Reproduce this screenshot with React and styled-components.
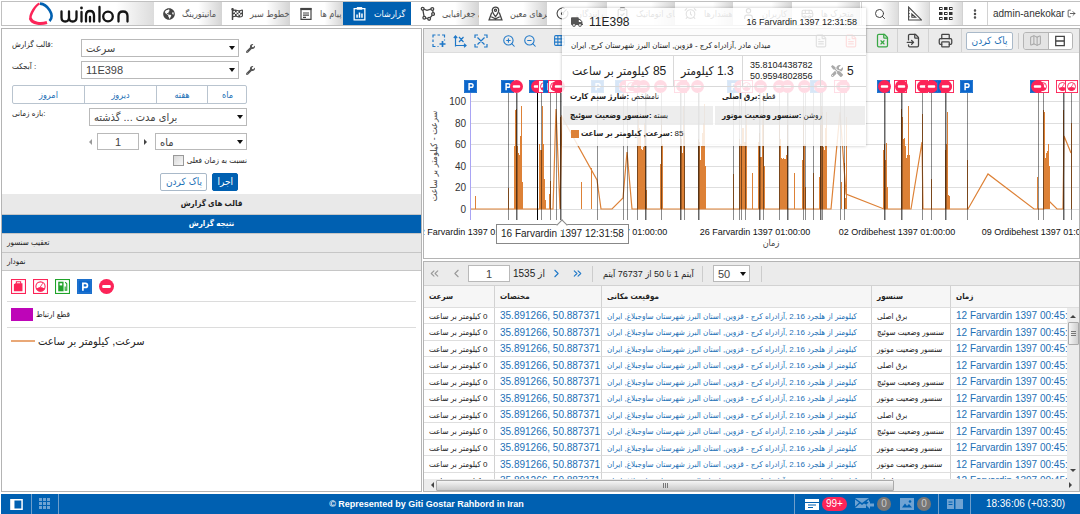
import React from 'react';
import styled, { createGlobalStyle, css } from 'styled-components';
import {
  FaGlobeAmericas, FaWrench, FaTools, FaFlagCheckered, FaTruck,
} from 'react-icons/fa';
import {
  Search, EllipsisVertical, LogOut, ZoomIn, ZoomOut, Printer, Map as MapIcon,
  ChevronLeft, ChevronRight, ChevronsLeft, ChevronsRight, AlarmClock, User,
  ClipboardCheck, FileText, FileX, FileInput, CircleGauge, Bus, Grid3x3, Image as Picture,
} from 'lucide-react';

const BLUE = '#0060b1';
const LINK = '#1c6fb5';
const LINE = '#d2d2d2';
const ORANGE = '#dd8136';
const RED = '#fc2458';

const GlobalStyle = createGlobalStyle`
  * { box-sizing: border-box; }
  html, body { margin: 0; padding: 0; }
  body {
    background: #fff;
    color: #222;
    font: 10px/14px "Liberation Sans", "DejaVu Sans Condensed", "DejaVu Sans", sans-serif;
  }
  button, input, select { font: inherit; margin: 0; padding: 0; color: inherit; }
  button { cursor: pointer; }
  a { text-decoration: none; color: inherit; }
  svg { display: block; flex: none; }
`;

const Page = styled.div`
  display: flex;
  flex-direction: column;
  gap: 2px;
  height: 100vh;
  padding: 1px 0 0 1px;
  overflow: hidden;
`;

/* ---------- top bar ---------- */

const TopBar = styled.header`
  display: flex;
  flex: none;
  height: 25px;
  border: 1px solid #c0c0c0;
  border-right: 0;
`;

const Brand = styled.div`
  display: flex;
  align-items: center;
  width: 152px;
  padding-left: 26px;
  background: linear-gradient(to right, #fff 75%, #dcdcdc);
`;

const Nav = styled.nav`
  display: flex;
  flex: 1;
  min-width: 0;
`;

const NavItem = styled.a`
  display: flex;
  align-items: center;
  gap: 7px;
  width: ${(p) => p.$w}px;
  padding-left: 9px;
  overflow: hidden;
  white-space: nowrap;
  font-size: 9px;
  color: ${(p) => (p.$active ? '#fff' : '#555')};
  background: ${(p) => (p.$active ? BLUE : 'linear-gradient(to right, #fff 65%, #d4d4d4)')};
  svg { color: ${(p) => (p.$active ? '#fff' : '#444')}; }
`;

const TopButton = styled.button`
  display: flex;
  align-items: center;
  justify-content: center;
  width: ${(p) => p.$w}px;
  border: 0;
  border-left: 1px solid ${LINE};
  background: ${(p) => (p.$shade ? 'linear-gradient(to right, #fff 50%, #dcdcdc)' : '#fff')};
  color: #444;
`;

const Account = styled.a`
  display: flex;
  align-items: center;
  gap: 2px;
  width: 93px;
  padding-left: 5px;
  border-left: 1px solid ${LINE};
  white-space: nowrap;
  color: #333;
`;

/* ---------- panels ---------- */

const Main = styled.main`
  display: grid;
  grid-template-columns: 421px minmax(0, 1fr);
  gap: 1px;
  flex: 1;
  min-height: 0;
`;

const Side = styled.section`
  border: 1px solid #b4b4b4;
  background: #fff;
`;

const Work = styled.div`
  display: grid;
  grid-template-rows: 231px minmax(0, 1fr);
  gap: 2px;
  min-height: 0;
`;

const Panel = styled.section`
  position: relative;
  display: flex;
  flex-direction: column;
  min-height: 0;
  border: 1px solid #b4b4b4;
  background: #fff;
`;

const Form = styled.form`
  display: flex;
  flex-direction: column;
  width: 246px;
  height: 165px;
  padding: 10px 0 0 10px;
`;

const Field = styled.div`
  display: flex;
  align-items: flex-start;
  justify-content: space-between;
  height: ${(p) => p.$h}px;
  width: ${(p) => p.$w || 235}px;
`;

const Label = styled.label`
  font-size: 8px;
  line-height: 11px;
  white-space: nowrap;
`;

const SelectBox = styled.span`
  position: relative;
  display: block;
  width: ${(p) => p.$w}px;
  height: ${(p) => p.$h || 18}px;
  select {
    appearance: none;
    width: 100%;
    height: 100%;
    padding: 0 4px;
    border: 1px solid #b9b9b9;
    border-radius: 0;
    background: #fff;
    color: #444;
    font-size: 11px;
  }
  &::after {
    content: '';
    position: absolute;
    right: 4px;
    top: 7px;
    border: 3px solid transparent;
    border-top: 4px solid #111;
    border-bottom: 0;
  }
`;

const FieldGroup = styled.div`
  display: flex;
  align-items: center;
  gap: ${(p) => p.$gap || 0}px;
`;

const ToolButton = styled.button`
  display: flex;
  align-items: center;
  justify-content: center;
  border: 0;
  background: none;
  color: ${(p) => p.$c || '#555'};
`;

const Segments = styled.div`
  display: grid;
  grid-template-columns: 71px 72px 51px 40px;
  height: 19px;
  margin-bottom: 4px;
  border: 1px solid #b9c4cf;
  border-radius: 2px;
  width: 235px;
  button {
    border: 0;
    background: none;
    color: ${LINK};
    font-size: 9px;
  }
  button + button { border-left: 1px solid #b9c4cf; }
`;

const NumberBox = styled.input`
  width: ${(p) => p.$w}px;
  height: 17px;
  border: 1px solid #b9b9b9;
  background: #fff;
  text-align: center;
  color: #444;
  font-size: 11px !important;
`;

const Check = styled.input`
  appearance: none;
  width: 11px;
  height: 11px;
  border: 1px solid #999;
  background: linear-gradient(135deg, #d8d8d8, #f8f8f8);
  &:checked { background: ${BLUE}; }
`;

const ActionButton = styled.button`
  height: 18px;
  padding: 0 4px;
  min-width: ${(p) => (p.$primary ? 25 : 47)}px;
  border: 1px solid ${(p) => (p.$primary ? BLUE : '#a9b9c9')};
  border-radius: 2px;
  background: ${(p) => (p.$primary ? BLUE : '#fff')};
  color: ${(p) => (p.$primary ? '#fff' : LINK)};
  white-space: nowrap;
  line-height: 14px;
`;

const Bar = styled.h2`
  margin: 0;
  height: ${(p) => p.$h}px;
  padding: 0 5px;
  border-bottom: 1px solid #c6c6c6;
  background: ${(p) => (p.$active ? BLUE : '#e9e9e9')};
  color: ${(p) => (p.$active ? '#fff' : '#222')};
  font-size: 8px;
  line-height: ${(p) => p.$h - 1}px;
  font-weight: ${(p) => (p.$left ? 400 : 700)};
  text-align: ${(p) => (p.$left ? 'left' : 'center')};
`;

const Legend = styled.div`
  padding: 0 5px;
`;

const LegendRow = styled.div`
  display: flex;
  align-items: center;
  gap: ${(p) => p.$gap || 3}px;
  height: ${(p) => p.$h}px;
  padding-left: 4px;
  & + & { border-top: 1px solid #dcdcdc; }
`;

const LegendText = styled.span`
  font-size: 11px;
`;

const Swatch = styled.i`
  width: ${(p) => p.$w}px;
  height: ${(p) => p.$h}px;
  background: ${(p) => p.$c};
`;

/* ---------- chart panel ---------- */

const ChartTools = styled.div`
  display: flex;
  align-items: center;
  flex: none;
  height: 24px;
  padding-left: 4px;
  background: #ebebeb;
  border-bottom: 1px solid #ddd;
`;

const Tool = styled(ToolButton)`
  width: ${(p) => p.$w || 21}px;
  height: 23px;
  color: ${(p) => p.$c || '#1f78c8'};
  border-right: ${(p) => (p.$sep ? `1px solid ${LINE}` : 0)};
`;

const Spacer = styled.div`
  flex: ${(p) => (p.$w ? `0 0 ${p.$w}px` : 1)};
`;

const Toggle = styled.div`
  display: flex;
  width: 50px;
  height: 18px;
  margin: 0 6px 0 4px;
  border: 1px solid #b5b5b5;
  border-radius: 3px;
  overflow: hidden;
`;

const ToggleSide = styled(ToolButton)`
  flex: 1;
  background: ${(p) => (p.$on ? '#fff' : '#e4e4e4')};
  color: ${(p) => (p.$on ? '#444' : '#aaa')};
  & + & { border-left: 1px solid #b5b5b5; }
`;

const ChartSvg = styled.svg`
  width: 100%;
  flex: 1;
  min-height: 0;
  overflow: hidden;
  .scale { font: 10px "Liberation Sans", sans-serif; fill: #333; }
  .tick { font: 9px "Liberation Sans", sans-serif; fill: #111; }
  .name { font: 9px "DejaVu Sans Condensed", "DejaVu Sans", sans-serif; fill: #444; }
`;

const Popup = styled.aside`
  position: absolute;
  left: 138px;
  top: -21px;
  z-index: 2;
  width: 304px;
  height: 138px;
  background: rgba(255, 255, 255, 0.84);
  box-shadow: 0 0 3px rgba(0, 0, 0, 0.25);
  color: #222;
`;

const PopupRow = styled.div`
  display: flex;
  align-items: center;
  height: ${(p) => p.$h}px;
  padding: 0 ${(p) => p.$pr || 9}px 0 9px;
  border-bottom: 1px solid #d9d9d9;
  white-space: nowrap;
  time { font-size: 9px; }
`;

const Title = styled.strong`
  flex: 1;
  margin-left: 6px;
  font-size: 12px;
  font-weight: 400;
`;

const Stat = styled.div`
  display: flex;
  align-items: center;
  gap: 4px;
  width: ${(p) => p.$w}px;
  height: 100%;
  padding-left: ${(p) => p.$p || 7}px;
  border-left: ${(p) => (p.$first ? 0 : '1px solid #d9d9d9')};
  font-size: ${(p) => p.$fs || 12}px;
  line-height: 11px;
`;

const Facts = styled.dl`
  display: grid;
  grid-template-columns: 150px 150px;
  grid-auto-rows: 19px;
  column-gap: 2px;
  margin: 0 1px;
  font-size: 8px;
`;

const Fact = styled.div`
  display: flex;
  align-items: center;
  gap: 2px;
  padding-left: 7px;
  white-space: nowrap;
  background: ${(p) => (p.$shade ? 'rgba(225,225,225,.6)' : 'none')};
  dt { font-weight: 700; }
  dd { margin: 0; }
`;

const SeriesNote = styled.div`
  display: flex;
  align-items: center;
  gap: 2px;
  height: 17px;
  padding-left: 9px;
  font-size: 8px;
  white-space: nowrap;
`;

const CursorLabel = styled.div`
  position: absolute;
  left: 72px;
  top: 195px;
  z-index: 3;
  height: 20px;
  padding: 0 4px;
  border: 1px solid #888;
  background: #fff;
  color: #222;
  line-height: 18px;
  white-space: nowrap;
  &::before {
    content: '';
    position: absolute;
    left: 61px;
    top: -4px;
    width: 7px;
    height: 7px;
    background: #fff;
    border: 1px solid #888;
    border-right: 0;
    border-bottom: 0;
    transform: rotate(45deg);
  }
`;

/* ---------- table panel ---------- */

const Pager = styled.div`
  display: flex;
  align-items: center;
  flex: none;
  height: 24px;
  background: #ebebeb;
  border-bottom: 1px solid ${LINE};
  white-space: nowrap;
`;

const PagerText = styled.span`
  width: ${(p) => p.$w}px;
  padding-left: ${(p) => p.$p || 0}px;
  font-size: ${(p) => p.$fs || 10}px;
`;

const Divider = styled.i`
  width: 1px;
  height: 16px;
  background: #ccc;
  margin: 0 ${(p) => p.$m || 0}px;
`;

const TableArea = styled.div`
  position: relative;
  flex: 1;
  min-height: 0;
  overflow: hidden;
`;

const Table = styled.table`
  width: 100%;
  min-width: 654px;
  table-layout: fixed;
  border-collapse: separate;
  border-spacing: 0;
  white-space: nowrap;
  th, td {
    padding: 0 4px 0 5px;
    border-right: 1px solid ${LINE};
    border-bottom: 1px solid #dedede;
    overflow: hidden;
    text-align: left;
    line-height: 13px;
  }
  th:last-child, td:last-child { border-right: 0; }
  th { height: 22px; background: #f6f6f6; font-size: 8px; }
  td { height: 16px; }
  tr:nth-child(even) td { height: 17px; }
`;

const Persian = styled.bdi`
  font-size: 8px;
`;

const LinkText = styled.a`
  color: ${LINK};
`;

const track = css`
  display: flex;
  align-items: center;
  justify-content: space-between;
  background: #ececec;
`;

const VScroll = styled.div`
  ${track}
  position: absolute;
  right: 0;
  top: 22px;
  bottom: 12px;
  width: 12px;
  flex-direction: column;
  padding: 4px 0;
`;

const HScroll = styled.div`
  ${track}
  position: absolute;
  left: 0;
  right: 0;
  bottom: 0;
  height: 12px;
  padding: 0 4px;
`;

const Arrow = styled.i`
  border: 3px solid transparent;
  border-${(p) => p.$side}: 3px solid ${(p) => p.$c || '#444'};
`;

const Thumb = styled.div`
  display: flex;
  align-items: center;
  justify-content: center;
  border: 1px solid #aaa;
  border-radius: 1px;
  background: ${(p) => (p.$v ? 'linear-gradient(to right, #f5f5f5, #cfcfcf)' : 'linear-gradient(#f5f5f5, #cacaca)')};
  ${(p) => (p.$v
    ? 'width: 11px; height: 23px; margin: 4px 0 auto;'
    : 'height: 11px; flex: 0 0 458px; margin: 0 auto 0 2px;')}
`;

const Grip = () => (
  <svg width="7" height="5" viewBox="0 0 7 5" stroke="#777"><path d="M1.500 0v5M3.500 0v5M5.500 0v5" /></svg>
);

const GripV = () => (
  <svg width="5" height="7" viewBox="0 0 5 7" stroke="#777"><path d="M0 1.500h5M0 3.500h5M0 5.500h5" /></svg>
);

/* ---------- status bar ---------- */

const StatusBar = styled.footer`
  display: flex;
  flex: none;
  height: 20px;
  background: ${BLUE};
  color: #fff;
`;

const StatusCell = styled.div`
  display: flex;
  align-items: center;
  justify-content: ${(p) => (p.$start ? 'flex-start' : 'center')};
  gap: 3px;
  width: ${(p) => p.$w}px;
  flex: ${(p) => (p.$grow ? 1 : 'none')};
  padding-left: ${(p) => (p.$start ? 10 : 0)}px;
  border-right: 1px solid #6f9ecb;
  color: ${(p) => (p.$dim ? '#6fa3d3' : '#fff')};
  font-weight: ${(p) => (p.$grow ? 700 : 400)};
  font-size: ${(p) => (p.$grow ? 9 : 10)}px;
  &:last-child { border-right: 0; }
`;

const Badge = styled.b`
  min-width: 14px;
  height: 14px;
  padding: 0 4px;
  margin-right: ${(p) => p.$m || 0}px;
  border-radius: 7px;
  background: ${(p) => p.$c};
  color: ${(p) => (p.$dim ? '#ccc' : '#fff')};
  font-weight: 400;
  text-align: center;
`;

/* ---------- drawings ---------- */

const Logo = () => (
  <svg width="106" height="23" viewBox="0 0 106 23" fill="none" aria-label="wialon" role="img">
    <path d="M11.500 1.500C8 3 1.500 12 2.500 17.500" stroke="#fc2458" strokeWidth="2.400" />
    <path d="M2.300 16C4 22.500 14 22 19 20.500" stroke="#fc2458" strokeWidth="3" />
    <path d="M12 1.600C19 2 27.500 13 21.500 19" stroke={BLUE} strokeWidth="2.600" />
    <g stroke="#151515" strokeWidth="2.300" strokeLinecap="round" strokeLinejoin="round">
      <path d="M33.500 9.500v6q0 4 3.700 4t3.800-4v-6M41 15.500q0 4 3.700 4t3.800-4v-6" />
      <path d="M53.500 10v9.500M58 19.500v-6q0-4.500 4-4.500t4 4.500v6M62 15v4.500" />
      <path d="M71.500 5v14.500" />
      <circle cx="80" cy="14.500" r="4.800" />
      <path d="M90.500 19.500v-5.500q0-4.500 4.500-4.500t4.500 4.500v5.500" />
    </g>
    <circle cx="53.500" cy="6" r="1.400" fill="#151515" />
  </svg>
);

const Glyph = ({ s = 14, children, w = 1.2 }) => (
  <svg width={s} height={s} viewBox="0 0 14 14" fill="none" stroke="currentColor" strokeWidth={w}>{children}</svg>
);

const MessagesIcon = () => <Glyph><path d="M2 1.600h10v10.800H2z" /><path d="M1.500 2h11" strokeWidth="2.200" /><path d="M4 6h6M4 8.200h6M4 10.400h3" /></Glyph>;
const ReportsIcon = () => <Glyph s={15}><path d="M2 2.500h10v10.500H2z" /><path d="M4.500 2.200h5" strokeWidth="2.400" /><path d="M4.700 11V8M7 11V6M9.300 11V7" strokeWidth="1.400" /></Glyph>;
const GeofenceIcon = () => <Glyph s={15}><path d="M2.500 2.500l4 1.500 5-1.500 1 5-4 4.500-4.500-1z" /><g fill="#fff"><circle cx="2.500" cy="2.500" r="1.300" /><circle cx="11.500" cy="2.800" r="1.300" /><circle cx="12.200" cy="7.500" r="1.300" /><circle cx="8.500" cy="12" r="1.300" /><circle cx="4" cy="11" r="1.300" /></g></Glyph>;
const RoutesIcon = () => <Glyph s={15}><path d="M3.500 6L1 13h12l-2.500-7M3 10l4 2 4-2" /><path d="M7 10C5 7.500 4 6 4 4a3 3 0 0 1 6 0c0 2-1 3.500-3 6z" fill="#fff" /><circle cx="7" cy="4" r="1" /></Glyph>;
const RulerIcon = () => <Glyph s={15} w={1}><path d="M1.500 1v12h12z" /><path d="M4.500 7.500v3h3.500z" /><path d="M1.500 4h1M1.500 7h1M1.500 10h1" /></Glyph>;
const AppsIcon = () => (
  <svg width="14" height="13" viewBox="0 0 14 13" fill="none" stroke="#333">
    {[0, 5, 10].map((y) => [0, 5, 10].map((x) => (
      <rect key={x + '-' + y} x={x + 0.5} y={y + 0.5} width="2.500" height="2" fill={(x + y) % 10 === 0 ? 'none' : '#333'} />
    )))}
  </svg>
);
const SelectAreaIcon = () => <Glyph><path d="M1 3.500V1h2.500M10 1h2.500v2.500M1 10v2.500h2.500M5.500 1h2.500M1 5.500v2.500M12.500 5.500v1M5.500 12.500h1" /><path d="M7.500 10h6M10.500 7v6" strokeWidth="1.700" /></Glyph>;
const AxisIcon = () => <Glyph><path d="M2.500 12.500V2M.8 4l1.700-2 1.700 2M2.500 11.500H13M11 9.800l2 1.700-2 1.700M6 3l4.500 5M10.500 3L6 8" /></Glyph>;
const ResetIcon = () => <Glyph><path d="M1 4V1h3M10 1h3v3M1 10v3h3M13 10v3h-3M3.500 3.500l7 7M10.500 3.500l-7 7" /></Glyph>;
const SplitIcon = () => <Glyph s={12} w={1.5}><path d="M2 1.500h10v11H2zM2 7h10" /></Glyph>;

const Square = ({ x = 0, y = 0, s = 13, c, children }) => (
  <g transform={`translate(${x} ${y}) scale(${s / 14})`}>
    <rect x=".5" y=".5" width="13" height="13" fill="#fff" stroke={c} />
    {children}
  </g>
);

const Marker = ({ type, x = 0, y = 0, s = 13 }) => {
  if (type === 'p') {
    return (
      <Square x={x} y={y} s={s} c="#1c70cc">
        <rect x="1" y="1" width="12" height="12" fill="#0b66cc" />
        <path d="M5.500 11V4h2.300a1.900 1.900 0 0 1 0 3.900H5.500" fill="none" stroke="#fff" strokeWidth="1.600" />
      </Square>
    );
  }
  if (type === 'stop') {
    return (
      <g transform={`translate(${x} ${y}) scale(${s / 14})`}>
        <circle cx="7" cy="7" r="7" fill={RED} />
        <rect x="3" y="5.600" width="8" height="2.800" rx="1" fill="#fff" />
      </g>
    );
  }
  if (type === 'gauge') {
    return (
      <Square x={x} y={y} s={s} c={RED}>
        <circle cx="7" cy="7" r="4.300" fill="#fff" stroke={RED} />
        <path d="M3.200 9.200Q7 6.500 10.800 9.200 7 13.500 3.200 9.200zM6.500 8l2.500-4" fill={RED} stroke={RED} strokeWidth=".8" />
      </Square>
    );
  }
  if (type === 'fuel') {
    return (
      <Square x={x} y={y} s={s} c="#20a32a">
        <path d="M3 2.500h5v9H3z" fill="#20a32a" />
        <path d="M4.300 4h2.400v2H4.300z" fill="#fff" />
        <path d="M9.500 3l1.500 1.500v6H9.500V7" fill="none" stroke="#20a32a" />
      </Square>
    );
  }
  return (
    <Square x={x} y={y} s={s} c={RED}>
      <path d="M2.700 5l1.500-1h6.500v7.500h-8z" fill={RED} />
      <path d="M5 4.500V2.500h4v2" fill="none" stroke={RED} />
    </Square>
  );
};

const MarkerIcon = ({ type }) => (
  <svg width="15" height="15" viewBox="0 0 15 15"><Marker type={type} s={15} /></svg>
);

/* ---------- chart ---------- */

const ZERO = 156;
const yOf = (v) => Math.round(ZERO - v * 1.08);

// [x, weight] for each event that draws a vertical line
const EVENTS = [
  [84, 0], [92, 1], [113, 2], [117, 0], [126, 0], [132, 0], [136, 1], [173, 0], [199, 0], [203, 0],
  [213, 0], [221, 1], [237, 0], [256, 1], [260, 0], [274, 1], [309, 0], [315, 0], [317, 0], [321, 0],
  [335, 1], [339, 0], [355, 0], [363, 1], [379, 0], [381, 0], [389, 0], [396, 1], [398, 0], [416, 0],
  [420, 0], [460, 1], [477, 1], [498, 0], [507, 0], [521, 1], [543, 0], [614, 0], [619, 0], [639, 1], [647, 0],
];

// runs of trips: start x and the speed at each following pixel
const TRIPS = [
  [51, [12]], [84, [19]],
  [90, [58, 92, 93, 58, 52, 50, 68, 95, 25]],
  [113, [22, 0, 60, 55, 55, 95, 60, 28, 8]],
  [125, [14, 26]], [136, [85]], [157, [25]], [167, [38]],
  [213, [60, 90, 75, 70, 56, 55, 57, 80, 70, 18]],
  [236, [42, 90, 60]],
  [256, [70, 65, 52, 95, 70]],
  [274, [65, 62, 45, 58, 70, 80, 97, 40]],
  [309, [32]], [315, [65, 60, 60, 75, 75, 62, 62, 85]],
  [328, [33]], [334, [62, 70, 48, 48, 85, 95, 40]],
  [355, [85, 65, 47, 46, 47, 46, 46, 50, 90]],
  [370, [33]], [378, [45, 95, 60, 20]], [389, [33]],
  [395, [30, 80, 95, 90, 57, 55, 75, 90]],
  [417, [25]], [420, [43, 10, 85]],
  [459, [55, 60, 45, 61, 20]],
  [477, [93, 85, 65, 66, 58, 47, 50, 95, 50]],
  [498, [88]], [507, [28]],
  [521, [55, 60, 90, 13, 12]], [543, [45]], [613, [30]],
  [619, [92, 90, 47, 52, 54, 60, 40]],
  [639, [92]], [647, [80]],
];

const TREND = [
  [47, 0], [129, 0], [132, 93], [136, 0], [138, 85], [173, 27], [177, 0], [188, 0], [199, 10], [203, 53], [208, 0],
  [407, 0], [416, 90], [422, 14], [460, 0], [487, 0], [498, 62], [499, 0], [544, 0], [564, 32], [610, 0],
  [620, 0], [625, 7], [633, 0], [639, 0], [640, 68], [647, 52],
];

const MARKERS = [
  ['p', 46], ['p', 83], ['stop', 92], ['p', 111], ['stop', 113], ['gauge', 120], ['p', 125], ['gauge', 130], ['stop', 134],
  ['p', 173], ['p', 197], ['stop', 201], ['gauge', 207], ['stop', 213], ['stop', 219], ['stop', 236], ['gauge', 256], ['stop', 259],
  ['stop', 273], ['p', 309], ['stop', 316], ['gauge', 322], ['stop', 336], ['stop', 355], ['stop', 363], ['stop', 380],
  ['p', 392], ['stop', 396], ['gauge', 416], ['stop', 419], ['p', 459], ['stop', 460], ['gauge', 476], ['stop', 477],
  ['gauge', 497], ['stop', 499], ['p', 511], ['stop', 507], ['p', 519], ['gauge', 523], ['stop', 521], ['p', 542],
  ['p', 612], ['gauge', 618], ['stop', 613], ['gauge', 638], ['gauge', 647],
];

const TICKS = [
  [46, '12 Farvardin 1397 01:00:00'], [188, '19 Farvardin 1397 01:00:00'], [331, '26 Farvardin 1397 01:00:00'],
  [473, '02 Ordibehest 1397 01:00:00'], [616, '09 Ordibehest 1397 01:00:00'],
];

const tripPath = ([x, speeds]) => `M${x} ${ZERO}${speeds.map((v, i) => `V${yOf(v)}H${x + i + 1}`).join('')}V${ZERO}z`;

const SpeedChart = () => (
  <ChartSvg role="img" aria-label="نمودار سرعت">
    {[0, 20, 40, 60, 80, 100].map((v) => (
      <g key={v}>
        <rect x="47" y={yOf(v)} width="100%" height="1" fill="#dedede" />
        <text className="scale" x="42" y={yOf(v) + 4} textAnchor="end">{v}</text>
      </g>
    ))}
    {TRIPS.map((t) => <path key={t[0]} d={tripPath(t)} fill={ORANGE} />)}
    <polyline points={TREND.map(([x, v]) => `${x},${yOf(v)}`).join(' ')} fill="none" stroke={ORANGE} strokeWidth="1.200" />
    <rect x="46" y="40" width="1" height="127" fill="#a9a4f4" />
    {EVENTS.map(([x, k]) => (
      <rect key={x} x={x} y="40" width={k === 1 ? 1.5 : 1} height="127" fill="#000" opacity={[0.45, 0.6, 1][k]} />
    ))}
    {MARKERS.map(([type, x], i) => <Marker key={i} type={type} x={x - 6} y={27} />)}
    {TICKS.map(([x, t]) => <text key={t} className="tick" x={x} y="182" textAnchor="middle">{t}</text>)}
    <text className="name" x="347" y="193" textAnchor="middle">زمان</text>
    <text className="name" transform="translate(13 103) rotate(-90)" textAnchor="middle">سرعت - کیلومتر بر ساعت</text>
  </ChartSvg>
);

/* ---------- sections ---------- */

const NAV = [
  ['مانیتورینگ', <FaGlobeAmericas size={12} />, 68],
  ['خطوط سیر', <FaFlagCheckered size={12} />, 68],
  ['پیام ها', <MessagesIcon />, 53],
  ['گزارشات', <ReportsIcon />, 68, true],
  ['محدوده های جغرافیایی', <GeofenceIcon />, 68],
  ['مسیرهای معین', <RoutesIcon />, 68],
  ['رانندگان', <CircleGauge size={13} />, 60],
  ['کارهای اتوماتیک', <ClipboardCheck size={13} />, 68],
  ['هشدارها', <AlarmClock size={13} />, 58],
  ['کاربران', <User size={13} />, 59],
  ['متحرک ها', <Bus size={13} />, 68],
];

const Header = () => (
  <TopBar>
    <Brand><Logo /></Brand>
    <Nav>
      {NAV.map(([text, icon, w, active]) => (
        <NavItem key={text} href="#" $w={w} $active={active}>{icon}<span>{text}</span></NavItem>
      ))}
    </Nav>
    <TopButton $w={37} $shade aria-label="جستجو"><Search size={12} /></TopButton>
    <TopButton $w={31} $shade aria-label="ابزار"><RulerIcon /></TopButton>
    <TopButton $w={33} $shade aria-label="برنامه ها"><AppsIcon /></TopButton>
    <TopButton $w={25} aria-label="بیشتر"><EllipsisVertical size={12} strokeWidth={3} /></TopButton>
    <Account href="#">admin-anekokar<LogOut size={9} /></Account>
  </TopBar>
);

const SelectField = ({ id, w, h, value }) => (
  <SelectBox $w={w} $h={h}>
    <select id={id} aria-label={value} defaultValue={value}><option>{value}</option></select>
  </SelectBox>
);

const ReportForm = () => (
  <Form onSubmit={(e) => e.preventDefault()}>
    <Field $h={22} $w={243}>
      <Label htmlFor="template">قالب گزارش:</Label>
      <FieldGroup $gap={7}>
        <SelectField id="template" w={158} value="سرعت" />
        <ToolButton type="button" aria-label="ویرایش قالب"><FaWrench size={9} /></ToolButton>
      </FieldGroup>
    </Field>
    <Field $h={24} $w={243}>
      <Label htmlFor="unit">آبجکت :</Label>
      <FieldGroup $gap={7}>
        <SelectField id="unit" w={158} value="11E398" />
        <ToolButton type="button" aria-label="ویرایش آبجکت"><FaWrench size={9} /></ToolButton>
      </FieldGroup>
    </Field>
    <Segments>
      {['امروز', 'دیروز', 'هفته', 'ماه'].map((t) => <button type="button" key={t}>{t}</button>)}
    </Segments>
    <Field $h={25}>
      <Label htmlFor="range">بازه زمانی:</Label>
      <SelectField id="range" w={158} value="برای مدت ... گذشته" />
    </Field>
    <Field $h={22}>
      <span />
      <FieldGroup $gap={5}>
        <ToolButton type="button" aria-label="کمتر"><Arrow $side="right" $c="#999" /></ToolButton>
        <NumberBox $w={42} defaultValue="1" aria-label="تعداد" />
        <ToolButton type="button" aria-label="بیشتر"><Arrow $side="left" /></ToolButton>
        <SelectField id="period" w={92} h={17} value="ماه" />
      </FieldGroup>
    </Field>
    <Field $h={18}>
      <span />
      <FieldGroup $gap={3}>
        <Check type="checkbox" id="relative" />
        <Label htmlFor="relative">نسبت به زمان فعلی</Label>
      </FieldGroup>
    </Field>
    <Field $h={19} $w={226}>
      <span />
      <FieldGroup $gap={5}>
        <ActionButton type="button">پاک کردن</ActionButton>
        <ActionButton type="submit" $primary>اجرا</ActionButton>
      </FieldGroup>
    </Field>
  </Form>
);

const Sidebar = () => (
  <Side>
    <ReportForm />
    <Bar $h={21}>قالب های گزارش</Bar>
    <Bar $h={19} $active>نتیجه گزارش</Bar>
    <Bar $h={19} $left>تعقیب سنسور</Bar>
    <Bar $h={18} $left>نمودار</Bar>
    <Legend>
      <LegendRow $h={30} $gap={7}>
        {['can', 'gauge', 'fuel', 'p', 'stop'].map((t) => <MarkerIcon key={t} type={t} />)}
      </LegendRow>
      <LegendRow $h={26}><Swatch $w={22} $h={13} $c="#be05b8" /><Persian>قطع ارتباط</Persian></LegendRow>
      <LegendRow $h={27}><Swatch $w={24} $h={2} $c="#e9a877" /><LegendText>سرعت, کیلومتر بر ساعت</LegendText></LegendRow>
    </Legend>
  </Side>
);

const ChartPanel = () => (
  <Panel>
    <ChartTools>
      <Tool aria-label="انتخاب"><SelectAreaIcon /></Tool>
      <Tool aria-label="محور"><AxisIcon /></Tool>
      <Tool aria-label="بازنشانی"><ResetIcon /></Tool>
      <Spacer $w={7} />
      <Tool aria-label="بزرگ نمایی"><ZoomIn size={14} strokeWidth={1.8} /></Tool>
      <Tool aria-label="کوچک نمایی"><ZoomOut size={14} strokeWidth={1.8} /></Tool>
      <Spacer $w={9} />
      <Tool aria-label="شبکه"><Grid3x3 size={13} /></Tool>
      <Spacer />
      <Tool $w={31} $c="#444" aria-label="متن"><FileText size={14} /></Tool>
      <Tool $w={31} $c="#e33" $sep aria-label="PDF"><FileText size={14} /></Tool>
      <Tool $w={31} $c="#39a845" $sep aria-label="Excel"><FileX size={15} /></Tool>
      <Tool $w={31} $c="#444" $sep aria-label="خروجی"><FileInput size={15} /></Tool>
      <Tool $w={33} $c="#444" $sep aria-label="چاپ"><Printer size={15} /></Tool>
      <Spacer $w={4} />
      <ActionButton>پاک کردن</ActionButton>
      <Spacer $w={5} />
      <Divider />
      <Toggle>
        <ToggleSide aria-label="نقشه"><MapIcon size={13} /></ToggleSide>
        <ToggleSide $on aria-label="تقسیم"><SplitIcon /></ToggleSide>
      </Toggle>
    </ChartTools>
    <SpeedChart />
    <CursorLabel>16 Farvardin 1397 12:31:58</CursorLabel>
    <Popup>
      <PopupRow $h={28}>
        <FaTruck size={12} color="#555" />
        <Title>11E398</Title>
        <time>16 Farvardin 1397 12:31:58</time>
      </PopupRow>
      <PopupRow $h={20}><Persian>میدان مادر ,آزادراه کرج - قزوین, استان البرز شهرستان کرج, ایران</Persian></PopupRow>
      <PopupRow $h={31} $pr={1}>
        <Stat $w={102} $p={1} $first><bdi dir="rtl">85 کیلومتر بر ساعت</bdi></Stat>
        <Stat $w={69}><bdi dir="rtl">1.3 کیلومتر</bdi></Stat>
        <Stat $w={78} $fs={9}><span>35.8104438782<br />50.9594802856</span></Stat>
        <Stat $w={44} $p={10}><FaTools size={12} color="#aaa" />5</Stat>
      </PopupRow>
      <Facts>
        <Fact><dt>شارژ سیم کارت:</dt><dd>نامشخص</dd></Fact>
        <Fact><dt>برق اصلی:</dt><dd>قطع</dd></Fact>
        <Fact $shade><dt>سنسور وضعیت سوئیچ:</dt><dd>بسته</dd></Fact>
        <Fact $shade><dt>سنسور وضعیت موتور:</dt><dd>روشن</dd></Fact>
      </Facts>
      <SeriesNote><Swatch $w={8} $h={8} $c={ORANGE} /><b>سرعت, کیلومتر بر ساعت:</b><span>85</span></SeriesNote>
    </Popup>
  </Panel>
);

const SENSORS = [
  'برق اصلی', 'سنسور وضعیت سوئیچ', 'سنسور وضعیت موتور', 'برق اصلی', 'سنسور وضعیت سوئیچ', 'سنسور وضعیت موتور',
  'برق اصلی', 'سنسور وضعیت سوئیچ', 'سنسور وضعیت موتور', 'سنسور وضعیت موتور', 'برق اصلی',
];

const TablePanel = () => (
  <Panel>
    <Pager>
      <Tool $c="#999" aria-label="اول"><ChevronsLeft size={13} /></Tool>
      <Tool $w={23} $c="#999" aria-label="قبلی"><ChevronLeft size={13} /></Tool>
      <NumberBox $w={42} defaultValue="1" aria-label="صفحه" />
      <PagerText $w={36} $p={3}>1535 از</PagerText>
      <Tool aria-label="بعدی"><ChevronRight size={13} /></Tool>
      <Tool aria-label="آخر"><ChevronsRight size={13} /></Tool>
      <Divider $m={4} />
      <PagerText $w={100} $p={6} $fs={9}><bdi dir="rtl">آیتم 1 تا 50 از 76737 آیتم</bdi></PagerText>
      <Divider $m={5} />
      <Spacer $w={5} />
      <SelectField id="page-size" w={37} h={17} value="50" />
      <Divider $m={11} />
    </Pager>
    <TableArea>
      <Table>
        <colgroup>
          <col width="71" /><col width="107" /><col width="270" /><col width="79" /><col />
        </colgroup>
        <thead>
          <tr>{['سرعت', 'مختصات', 'موقیعت مکانی', 'سنسور', 'زمان'].map((t) => <th key={t}>{t}</th>)}</tr>
        </thead>
        <tbody>
          {SENSORS.map((sensor, i) => (
            <tr key={i}>
              <td><Persian dir="rtl">0 کیلومتر بر ساعت</Persian></td>
              <td><LinkText href="#">35.891266, 50.887371</LinkText></td>
              <td><LinkText href="#"><Persian dir="rtl">کیلومتر از هلجرد 2.16 ,آزادراه کرج - قزوین, استان البرز شهرستان ساوجبلاغ, ایران</Persian></LinkText></td>
              <td><Persian>{sensor}</Persian></td>
              <td><LinkText href="#">12 Farvardin 1397 00:45:40</LinkText></td>
            </tr>
          ))}
        </tbody>
      </Table>
      <VScroll aria-hidden="true"><Arrow $side="bottom" /><Thumb $v><GripV /></Thumb><Arrow $side="top" /></VScroll>
      <HScroll aria-hidden="true"><Arrow $side="right" /><Thumb><Grip /></Thumb><Arrow $side="left" /></HScroll>
    </TableArea>
  </Panel>
);

const Footer = () => (
  <StatusBar>
    <StatusCell $w={31}><Glyph s={13} w={1.6}><path d="M1 2h12v10H1zM4 2v10M2.500 2v10" /></Glyph></StatusCell>
    <StatusCell $w={27} $dim>
      <svg width="12" height="12" viewBox="0 0 12 12" fill="currentColor">
        {[0, 4, 8].map((y) => [0, 4, 8].map((x) => <rect key={x + '-' + y} x={x} y={y} width="3" height="3" />))}
      </svg>
    </StatusCell>
    <StatusCell $grow>© Represented by Giti Gostar Rahbord in Iran</StatusCell>
    <StatusCell $w={144} $start $dim>
      <svg width="14" height="11" viewBox="0 0 14 11"><path d="M0 0h14v3H0zM0 4h14v7H0z" fill="#fff" /><path d="M3 6h8M3 8.500h5" stroke={BLUE} /></svg>
      <Badge $c={RED} $m={5}>99+</Badge>
      <svg width="19" height="12" viewBox="0 0 19 12" fill="currentColor"><path d="M0 0h14L7 5zM0 1.500l4 3-4 4zM5 5.500l2 1.500 2-1.500 2 1v3.500H0zM14 1.500v3l-2.500-1zM11 7l4-4v2.500h4v3h-4V11z" /></svg>
      <Badge $c="#777" $dim $m={6}>0</Badge>
      <svg width="14" height="12" viewBox="0 0 14 12"><path d="M0 0h14v12H0z" fill="currentColor" /><path d="M2 9.500l3-4 2 2.500 2-2 3 3.500z" fill={BLUE} /><circle cx="10" cy="3.500" r="1.300" fill={BLUE} /></svg>
      <Badge $c="#777" $dim>0</Badge>
    </StatusCell>
    <StatusCell $w={32} $dim>
      <svg width="16" height="10" viewBox="0 0 16 10" fill="currentColor"><path d="M0 0h7v10H0zM8.500 0H16v10H8.500z" /><path d="M1.500 3h4M1.500 5.500h4" stroke={BLUE} /></svg>
    </StatusCell>
    <StatusCell $w={109}>18:36:06 (+03:30)</StatusCell>
  </StatusBar>
);

export default function App() {
  return (
    <Page dir="ltr" lang="fa">
      <GlobalStyle />
      <Header />
      <Main>
        <Sidebar />
        <Work>
          <ChartPanel />
          <TablePanel />
        </Work>
      </Main>
      <Footer />
    </Page>
  );
}
